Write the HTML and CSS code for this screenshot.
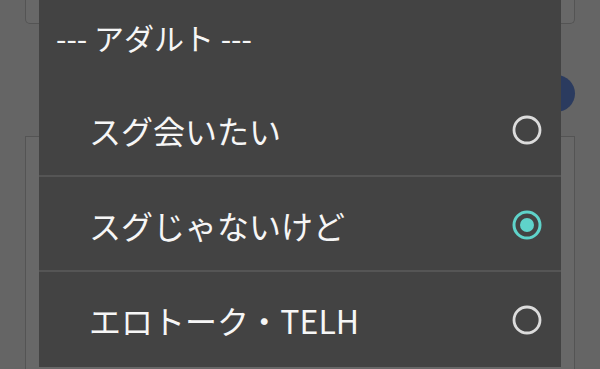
FILE: index.html
```html
<!DOCTYPE html>
<html lang="ja">
<head>
<meta charset="utf-8">
<link rel="stylesheet" href="styles.css">
</head>
<body>
<div class="page">
  <div class="card card-top"></div>
  <div class="fab-row"><span class="fab"></span></div>
  <div class="card card-main"></div>
</div>
<div class="dialog">
  <div class="dialog-head">--- アダルト ---</div>
  <div class="opt">
    <span class="label">スグ会いたい</span>
    <svg class="radio" viewBox="0 0 30 30" width="30" height="30"><circle cx="15" cy="15" r="13" fill="none" stroke="#dcdcdc" stroke-width="2.8"/></svg>
  </div>
  <div class="opt">
    <span class="label">スグじゃないけど</span>
    <svg class="radio" viewBox="0 0 30 30" width="30" height="30"><circle cx="15" cy="15" r="13" fill="none" stroke="#5fd3ca" stroke-width="3"/><circle cx="15" cy="15" r="7" fill="#5fd3ca"/></svg>
  </div>
  <div class="opt last">
    <span class="label">エロトーク・TELH</span>
    <svg class="radio" viewBox="0 0 30 30" width="30" height="30"><circle cx="15" cy="15" r="13" fill="none" stroke="#dcdcdc" stroke-width="2.8"/></svg>
  </div>
</div>
</body>
</html>
```
FILE: styles.css
```css
html, body {
  margin: 0;
  padding: 0;
  width: 600px;
  height: 369px;
  overflow: hidden;
  background: #656565;
}
.page {
  padding: 0 25px;
  display: flex;
  flex-direction: column;
}
.card {
  background: #686868;
  border: 1px solid #545454;
  box-sizing: border-box;
}
.card-top {
  height: 24px;
  border-top: none;
  border-radius: 0 0 5px 5px;
}
.fab-row {
  display: flex;
  justify-content: flex-end;
  margin-top: 51px;
}
.fab {
  width: 37px;
  height: 37px;
  border-radius: 50%;
  background: #2b3b5f;
}
.card-main {
  margin-top: 24px;
  height: 240px;
  border-bottom: none;
}
.dialog {
  position: absolute;
  left: 39px;
  top: 0;
  width: 522px;
  height: 367px;
  background: #434343;
  font-family: "Noto Sans CJK JP", "Noto Sans", sans-serif;
  color: #f6f6f6;
  display: flex;
  flex-direction: column;
}
.dialog-head {
  height: 82px;
  display: flex;
  align-items: center;
  padding: 0 0 8px 17px;
  font-size: 30px;
  box-sizing: border-box;
}
.opt {
  height: 95px;
  display: flex;
  align-items: center;
  justify-content: space-between;
  padding: 3px 19px 0 50px;
  box-sizing: border-box;
  border-bottom: 2px solid #555555;
  font-size: 32px;
  flex-shrink: 0;
}
.opt.last {
  border-bottom: none;
  height: 93px;
}
.radio {
  display: block;
}
```
